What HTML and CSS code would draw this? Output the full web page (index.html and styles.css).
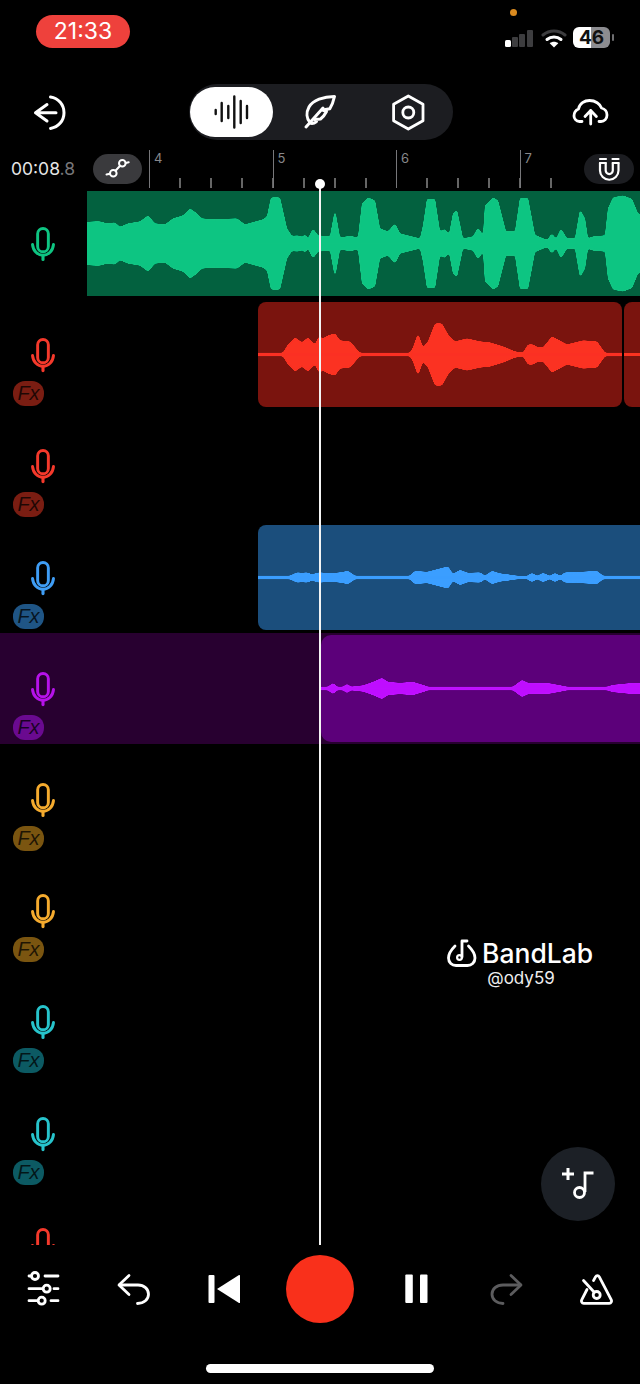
FILE: index.html
```html
<!DOCTYPE html>
<html>
<head>
  <title>BandLab Studio</title>
  <meta charset="UTF-8">
  <link rel="stylesheet" href="styles.css">
</head>
<body>
  <svg class="defs" width="0" height="0">
    <symbol id="mic" viewBox="0 0 26 36">
      <rect x="7.500" y="1.500" width="11" height="24" rx="5.500" fill="none" stroke="currentColor" stroke-width="3"/>
      <path d="M2.200 18c.6 6.500 5.300 11 10.800 11s10.200-4.500 10.800-11" fill="none" stroke="currentColor" stroke-width="3" stroke-linecap="round"/>
      <path d="M13 29v4.500" stroke="currentColor" stroke-width="3.200" stroke-linecap="round"/>
    </symbol>
    <filter id="soften" x="-5%" y="-20%" width="110%" height="140%">
      <feGaussianBlur stdDeviation="1.100"/>
      <feColorMatrix values="1 0 0 0 0  0 1 0 0 0  0 0 1 0 0  0 0 0 9 -3.500"/>
    </filter>
  </svg>

  <div class="page">
    <div class="status-bar">
      <div class="clock">21:33</div>
      <div class="status-icons">
        <svg class="signal" width="30" height="20" viewBox="504 27 30 20">
          <rect x="505" y="39" width="6" height="7" rx="1.500" fill="#fff"/>
          <rect x="512" y="36" width="6" height="10" rx="1" fill="#3d3d3f"/>
          <rect x="519" y="33" width="6" height="13" rx="1" fill="#3d3d3f"/>
          <rect x="527" y="29" width="6" height="17" rx="1" fill="#3d3d3f"/>
        </svg>
        <svg class="wifi" width="26" height="20" viewBox="540 27 26 20">
          <path d="M542 34c6.500-5.500 15.500-5.500 22 0" fill="none" stroke="#3d3d3f" stroke-width="3" stroke-linecap="round"/>
          <path d="M546 38.500c4-3.500 10-3.500 14 0" fill="none" stroke="#fff" stroke-width="3" stroke-linecap="round"/>
          <path d="M553 46.500l-4.300-4.300c2.500-2 6.100-2 8.600 0z" fill="#fff"/>
        </svg>
        <div class="battery">46</div>
        <div class="battery-nub"></div>
      </div>
      <div class="privacy-dot"></div>
    </div>

    <div class="top-bar">
      <svg width="40" height="40" viewBox="30 92 40 40" fill="none" stroke="#fff" stroke-width="3" stroke-linecap="round" stroke-linejoin="round">
        <path d="M47 104.500l-11.500 8.200 11.500 8.300M35.500 112.700h20.500"/>
        <path d="M50.500 97c8 1.200 13.500 7.800 13.500 15.700s-5.500 14.500-13.500 15.700"/>
      </svg>
      <div class="mode-tabs">
        <div class="tab tab-active">
          <svg width="40" height="40" viewBox="212 92 40 40" stroke="#111" stroke-width="2.400" stroke-linecap="round">
            <path d="M215.700 110v4M221.700 103v18M228.300 106v12M234.300 96.500v31M240.700 101v22M247 106v12"/>
          </svg>
        </div>
        <div class="tab tab-feather">
          <svg width="40" height="40" viewBox="300 92 40 40" fill="none" stroke="#fff" stroke-width="3" stroke-linecap="round" stroke-linejoin="round">
            <path d="M306 127l17-19"/>
            <path d="M310 122.500c-3.500-4-4-10-1-15.500 4-7 14.500-10.500 25.500-10.500-1 4.500-2.700 9-4.700 12.300l-7.300 1.200 4 1.500c-1.500 3-3.500 5.500-6 7.500l-5.500.5 1.500 2c-2.500 2-5 2.200-6.500 1.500z"/>
          </svg>
        </div>
        <div class="tab tab-hex">
          <svg width="40" height="40" viewBox="388 92 40 40" fill="none" stroke="#fff" stroke-width="2.800" stroke-linejoin="round">
            <path d="M408.300 96l14.700 8.300v16.400l-14.700 8.300-14.700-8.300v-16.400z"/>
            <circle cx="408.300" cy="112.500" r="5.500"/>
          </svg>
        </div>
      </div>
      <svg width="40" height="40" viewBox="570 92 40 40" fill="none" stroke="#fff" stroke-width="2.800" stroke-linecap="round" stroke-linejoin="round">
        <path d="M582 121.500h-2.500c-3.500 0-5.500-3-5.500-5.500 0-3.500 2-6 4.500-7 1-5.500 6-8.500 11-8.500 6 0 10.500 3.500 12 7.500 3.500.8 5.500 4 5.500 7 0 3.500-2.500 6.500-6 6.500h-2"/>
        <path d="M590.700 124v-13.500M585 116.500l5.700-6 5.700 6"/>
      </svg>
    </div>

    <div class="ruler">
      <div class="time">00:08<span class="time-tenths">.8</span></div>
      <div class="chip chip-automation">
        <svg width="30" height="24" viewBox="103 158 30 24" fill="none" stroke="#fff" stroke-width="2" stroke-linecap="round">
          <circle cx="113.300" cy="174.300" r="3.300"/>
          <circle cx="122.300" cy="164.300" r="3.300"/>
          <path d="M106.500 175.500l3.500-.8M115.500 171.800l4.600-5M125.700 164l3-.8"/>
        </svg>
      </div>
      <div class="scale">
        <div class="bar">4</div>
        <div class="bar">5</div>
        <div class="bar">6</div>
        <div class="bar bar-last">7</div>
      </div>
      <div class="chip chip-magnet">
        <svg width="26" height="26" viewBox="596 157 26 26" fill="none" stroke="#fff" stroke-width="2.200" stroke-linecap="round">
          <path d="M600 160h6M612.500 160h6"/>
          <path d="M600 164v7.500a9.250 9.250 0 0 0 18.500 0v-7.500"/>
          <path d="M605.700 164v7.500a3.550 3.550 0 0 0 7.100 0v-7.500"/>
          <path d="M600 164h5.700M612.800 164h5.700"/>
        </svg>
      </div>
    </div>

    <div class="timeline">
      <div class="track track-green">
        <div class="track-head">
          <svg class="mic"><use href="#mic"/></svg>
        </div>
        <div class="lane">
          <div class="clip clip-green">
            <svg class="wave" viewBox="87 -52.500 553 105" preserveAspectRatio="none">
              <g class="wave-shape">
                <g id="wave-green">
                  <path d="M77 0V-21L95-22 100-22 107-20 115-21 120-16.500 128-20 140-22 148-28 155-20 165-19 173-25 183-28 190-35 197-30 202-25 213-24 237-25 245-19 263-24 267-27 271-46 280-46 287-15 292-7.500 298-8 302-6.500 305-9 308-5 313-15 318-8 330-7 335-34 340-6 350-7.500 358-6 362-40 368-46 375-43 380-15 388-12 395-20 400-10 420-5 423-18 427-44.500 435-44.500 440-12 445-14.500 449-9 453-30 457-33.500 463-5 473-7 478-16 483-8 485-38 493-46 498-43 506-12 515-12 520-45.500 528-45.500 535-8.500 547-3.500 552-10 556-4.500 561-15 567-5 575-5 580-34 585-25 588-5 593-7 605-8 608-35 613-46 623-48 632-44.500 638-30 650-25V0Z"/>
                </g>
                <use href="#wave-green" transform="scale(1 -1)"/>
              </g>
            </svg>
          </div>
        </div>
      </div>

      <div class="track track-red">
        <div class="track-head">
          <svg class="mic"><use href="#mic"/></svg>
          <div class="fx">Fx</div>
        </div>
        <div class="lane">
          <div class="clip clip-red clip-first">
            <svg class="wave" viewBox="258 -52.500 364 105" preserveAspectRatio="none">
              <g class="wave-shape">
                <g id="wave-red">
                  <path d="M248 0V-1.800H283L288-10 295-17 302-12 308-17 315-10 319-18 323-16 328-19 335-21 340-14 350-13 357-5 360-1.800H410L413-7 418-21 423-7 428-13 435-31 442-31 448-20 455-13 467-16 480-13 490-12 503-8 515-3 523-1.800 528-10 533-10 538-7 543-7 552-18 567-10 583-14 597-13 605-1.800H632V0Z"/>
                </g>
                <use href="#wave-red" transform="scale(1 -1)"/>
              </g>
            </svg>
          </div>
          <div class="clip clip-red clip-next">
            <div class="wave-line"></div>
          </div>
        </div>
      </div>

      <div class="track track-red">
        <div class="track-head">
          <svg class="mic"><use href="#mic"/></svg>
          <div class="fx">Fx</div>
        </div>
        <div class="lane"></div>
      </div>

      <div class="track track-blue">
        <div class="track-head">
          <svg class="mic"><use href="#mic"/></svg>
          <div class="fx">Fx</div>
        </div>
        <div class="lane">
          <div class="clip clip-blue clip-first">
            <svg class="wave" viewBox="258 -52.500 382 105" preserveAspectRatio="none">
              <g class="wave-shape">
                <g id="wave-blue">
                  <path d="M248 0V-1.800H290L297-5 302-4.500 307-5 312-3 317-4.500 320-5 330-4 340-5 348-6.500 355-1.800H410L415-6.500 427-5.500 448-11 453-3.500 460-7.500 468-4.500 480-5 485-1.800 492-6.500 500-4 517-1.800 527-1.500 532-4.500 537-1.500 543-4.500 550-1.500 555-4.500 560-1.500 565-5 572-5 597-6.500 603-1.800H650V0Z"/>
                </g>
                <use href="#wave-blue" transform="scale(1 -1)"/>
              </g>
            </svg>
          </div>
        </div>
      </div>

      <div class="track track-purple">
        <div class="track-head">
          <svg class="mic"><use href="#mic"/></svg>
          <div class="fx">Fx</div>
        </div>
        <div class="lane">
          <div class="clip clip-purple clip-first">
            <svg class="wave" viewBox="321 -53.500 319 107" preserveAspectRatio="none">
              <g class="wave-shape">
                <g id="wave-purple">
                  <path d="M311 0V-1.800H328L333-5.500 337-1.800H343L347-4.500 351-1.800 363-3 373-6.500 382-10.500 388-6.500 400-5.500 413-6.500 423-3.500 428-1.800H513L522-8.500 528-5.500 550-5 567-1.800H607L613-3.500 633-5.500 650-5V0Z"/>
                </g>
                <use href="#wave-purple" transform="scale(1 -1)"/>
              </g>
            </svg>
          </div>
        </div>
      </div>

      <div class="track track-amber">
        <div class="track-head">
          <svg class="mic"><use href="#mic"/></svg>
          <div class="fx">Fx</div>
        </div>
      </div>
      <div class="track track-amber">
        <div class="track-head">
          <svg class="mic"><use href="#mic"/></svg>
          <div class="fx">Fx</div>
        </div>
      </div>
      <div class="track track-teal">
        <div class="track-head">
          <svg class="mic"><use href="#mic"/></svg>
          <div class="fx">Fx</div>
        </div>
      </div>
      <div class="track track-teal">
        <div class="track-head">
          <svg class="mic"><use href="#mic"/></svg>
          <div class="fx">Fx</div>
        </div>
      </div>
      <div class="track track-red">
        <div class="track-head">
          <svg class="mic"><use href="#mic"/></svg>
        </div>
      </div>
    </div>

    <div class="playhead"></div>

    <div class="watermark">
      <div class="watermark-brand">
        <svg width="30" height="28" viewBox="447 937 30 28" fill="none" stroke="#fff" stroke-width="2.800" stroke-linecap="round" stroke-linejoin="round">
          <path d="M455 944c-4 4-6.500 8-6.500 12 0 4.500 3.500 7.500 7.500 7.500h11.500c4 0 7.500-3 7.500-7.500 0-4-2.500-8-6.500-12"/>
          <path d="M462 955v-16h5"/>
          <circle cx="459.500" cy="955.500" r="2.400" stroke-width="2.200"/>
        </svg>
        <span>BandLab</span>
      </div>
      <div class="watermark-user">@ody59</div>
    </div>

    <div class="add-track">
      <svg width="74" height="74" viewBox="541 1147 74 74" fill="none" stroke="#fff" stroke-width="2.800">
        <path d="M562 1174h12M568 1168v12" stroke-width="3"/>
        <path d="M585 1192v-19h8.500"/>
        <circle cx="579.500" cy="1192.500" r="5"/>
      </svg>
    </div>

    <div class="transport">
      <div class="controls">
        <svg class="ctl" viewBox="22 1267 44 44" fill="none" stroke="#fff" stroke-width="2.800" stroke-linecap="round">
          <path d="M29 1276h2M45 1276h13M29 1288.700h13M54 1288.700h4M29 1300.700h8M51 1300.700h7"/>
          <circle cx="35" cy="1276" r="3.500"/>
          <circle cx="46.700" cy="1288.700" r="3.500"/>
          <circle cx="41.700" cy="1300.700" r="3.500"/>
        </svg>
        <svg class="ctl" viewBox="111 1267 44 44" fill="none" stroke="#fff" stroke-width="2.800" stroke-linecap="round" stroke-linejoin="round">
          <path d="M129 1275.500l-10 9.500 10 9.500"/>
          <path d="M119.500 1285h18.500c6 0 10.500 4 10.500 9.200s-4.500 9.300-11 9.300"/>
        </svg>
        <svg class="ctl" viewBox="202 1267 44 44" fill="#fff">
          <rect x="208.500" y="1275" width="6" height="28" rx="1"/>
          <path d="M217 1289l22-14c.6-.3 1 0 1 .6v26.800c0 .6-.4.9-1 .6z"/>
        </svg>
        <div class="record"></div>
        <svg class="ctl" viewBox="395 1267 44 44" fill="#fff">
          <rect x="405.300" y="1274.500" width="7.500" height="28.500" rx="1"/>
          <rect x="420" y="1274.500" width="7.500" height="28.500" rx="1"/>
        </svg>
        <svg class="ctl" viewBox="484 1267 44 44" fill="none" stroke="#5c5c5e" stroke-width="2.800" stroke-linecap="round" stroke-linejoin="round">
          <path d="M511 1275.500l10 9.500-10 9.500"/>
          <path d="M520.500 1285H503c-6.500 0-11 4-11 9.200s4.500 9.300 11 9.300"/>
        </svg>
        <svg class="ctl ctl-last" viewBox="575 1267 44 44" fill="none" stroke="#fff" stroke-width="2.800" stroke-linecap="round" stroke-linejoin="round">
          <path d="M587 1289.500l-5.300 10.300c-.8 1.600.2 3.500 2 3.500h25.600c1.800 0 2.800-1.900 2-3.500l-12-23c-.9-1.700-2.900-1.700-3.800 0l-2 3.800"/>
          <path d="M583.500 1280.500l10.500 11.500"/>
          <circle cx="596.700" cy="1295" r="3.500"/>
        </svg>
      </div>
      <div class="home-bar"></div>
    </div>
  </div>
</body>
</html>
```

FILE: styles.css
```css
body {
  margin: 0;
  background-color: #000;
  color: #fff;
  font-family: Inter, "Liberation Sans", sans-serif;
  overflow: hidden;
}

.defs {
  position: absolute;
}

svg {
  display: block;
}

.page {
  position: relative;
  width: 640px;
  height: 1384px;
  overflow: hidden;
}

/* status bar */
.status-bar {
  height: 84px;
  box-sizing: border-box;
  padding: 15px 0 0 36px;
  display: flex;
  justify-content: space-between;
}

.clock {
  width: 94px;
  height: 33px;
  border-radius: 17px;
  background-color: #ee413c;
  font-size: 23px;
  line-height: 33px;
  text-align: center;
}

.status-icons {
  height: 21px;
  margin-top: 12px;
  padding-right: 26px;
  display: flex;
  align-items: center;
}

.signal {
  margin-right: 7px;
}

.wifi {
  margin-right: 6px;
}

.battery {
  width: 37px;
  height: 21px;
  border-radius: 6px;
  background: linear-gradient(90deg, #fff 48%, #8c8c90 48%);
  color: #111;
  font-size: 19px;
  font-weight: 700;
  line-height: 21px;
  text-align: center;
}

.battery-nub {
  width: 2px;
  height: 7px;
  margin-left: 2px;
  border-radius: 1px;
  background-color: #6e6e70;
}

.privacy-dot {
  position: absolute;
  left: 510px;
  top: 9px;
  width: 7px;
  height: 7px;
  border-radius: 50%;
  background-color: #d98a1f;
}

/* top bar */
.top-bar {
  height: 56px;
  padding: 0 30px;
  margin-bottom: 10px;
  display: flex;
  justify-content: space-between;
  align-items: center;
}

.mode-tabs {
  width: 264px;
  height: 56px;
  margin-left: 2px;
  box-sizing: border-box;
  padding: 3px 1px;
  border-radius: 28px;
  background-color: #1c1d21;
  display: flex;
}

.tab {
  display: flex;
  justify-content: center;
  align-items: center;
}

.tab-active {
  width: 83px;
  border-radius: 25px;
  background-color: #fff;
}

.tab-feather {
  width: 94px;
}

.tab-hex {
  width: 82px;
}

/* ruler */
.ruler {
  height: 38px;
  padding: 0 6px 0 11px;
  display: flex;
}

.time {
  width: 82px;
  padding-top: 9px;
  font-size: 17.5px;
  line-height: 20px;
  color: #e6e6e6;
}

.time-tenths {
  color: #77777a;
}

.chip {
  margin-top: 4px;
  display: flex;
  justify-content: center;
  align-items: center;
  height: 30px;
  border-radius: 15px;
}

.chip-automation {
  width: 49px;
  background-color: #3a3a3d;
}

.chip-magnet {
  width: 50px;
  margin-left: auto;
  background-color: #1c1d21;
}

.scale {
  margin-left: 7px;
  display: flex;
}

.bar {
  width: 123.5px;
  box-sizing: border-box;
  padding-left: 4px;
  border-left: 1.5px solid #77777a;
  font-size: 13px;
  line-height: 16px;
  color: #88888a;
  background-image: repeating-linear-gradient(90deg, transparent 0 29.4px, #666 29.4px 30.9px);
  background-size: 100% 10px;
  background-position: bottom left;
  background-repeat: no-repeat;
}

.bar-last {
  width: 33px;
}

/* tracks */
.timeline {
  height: 1057px;
  overflow: hidden;
}

.track {
  height: 111.2px;
  display: flex;
  color: #f5392b;
}

.track-head {
  width: 87px;
  flex: none;
  box-sizing: border-box;
  padding-top: 39px;
}

.mic {
  width: 26px;
  height: 35px;
  margin-left: 30px;
}

.fx {
  width: 31px;
  height: 25px;
  margin: 8px 0 0 13px;
  border-radius: 12px;
  font-family: "Liberation Sans", sans-serif;
  font-size: 20px;
  font-style: italic;
  line-height: 25px;
  text-align: center;
  color: rgba(0, 0, 0, 0.75);
}

.lane {
  flex: 1;
  display: flex;
  align-items: center;
}

.clip {
  height: 105px;
  overflow: hidden;
  display: flex;
  align-items: center;
}

.wave {
  width: 100%;
  height: 100%;
  fill: currentColor;
  stroke: none;
}

.wave-shape {
  filter: url(#soften);
}

.wave-line {
  width: 100%;
  height: 3px;
  background-color: currentColor;
}

.clip-first {
  margin-left: 171px;
  flex: 1;
  border-radius: 8px 0 0 8px;
}

.clip-next {
  margin-left: 2px;
  flex: 1;
  border-radius: 8px 0 0 8px;
}

.track-green {
  color: #0ec582;
}

.clip-green {
  flex: 1;
  background-color: #03613f;
}

.track-red .fx {
  background-color: #7a1d12;
}

.clip-red {
  background-color: #7a140e;
  color: #fb3320;
}

.clip-red.clip-first {
  flex: none;
  width: 364px;
  border-radius: 8px;
}

.track-blue {
  color: #3f9df5;
}

.track-blue .fx {
  background-color: #1f5585;
}

.clip-blue {
  background-color: #1b4e7c;
  color: #3a9eff;
}

.track-purple {
  color: #b612ea;
  background-color: #280030;
}

.track-purple .fx {
  background-color: #6a0a90;
}

.clip-purple {
  margin-left: 234px;
  height: 107px;
  border-radius: 10px 0 0 10px;
  background-color: #5c007a;
  color: #bf0fff;
}

.track-amber {
  color: #f5ab2e;
}

.track-amber .fx {
  background-color: #7a5510;
}

.track-teal {
  color: #27c4cc;
}

.track-teal .fx {
  background-color: #0c5a63;
}

/* things lying over the tracks */
.playhead {
  position: absolute;
  left: 319px;
  top: 184px;
  width: 2px;
  height: 1061px;
  background-color: #f4f4f4;
}

.playhead::before {
  content: "";
  position: absolute;
  left: -4px;
  top: -5px;
  width: 10px;
  height: 10px;
  border-radius: 50%;
  background-color: #fff;
}

.watermark {
  position: absolute;
  left: 447px;
  top: 937px;
  width: 148px;
  text-align: center;
}

.watermark-brand {
  display: flex;
  align-items: center;
  font-size: 26.5px;
  font-weight: 500;
  line-height: 32px;
}

.watermark-brand span {
  margin-left: 5px;
}

.watermark-user {
  font-size: 17px;
  line-height: 19px;
  color: #eee;
}

.add-track {
  position: absolute;
  left: 541px;
  top: 1147px;
  width: 74px;
  height: 74px;
  border-radius: 50%;
  background-color: #1c2026;
}

/* transport */
.transport {
  height: 139px;
  box-sizing: border-box;
  padding-top: 10px;
}

.controls {
  display: grid;
  grid-template-columns: 88px 90px 92px 100px 94px 84px 92px;
  justify-items: center;
  align-items: center;
}

.ctl {
  width: 44px;
  height: 44px;
}

.ctl-last {
  justify-self: end;
  margin-right: 21px;
}

.record {
  width: 68px;
  height: 68px;
  border-radius: 50%;
  background-color: #f9301b;
}

.home-bar {
  width: 228px;
  height: 9px;
  margin: 41px auto 0;
  border-radius: 5px;
  background-color: #fff;
}
```
